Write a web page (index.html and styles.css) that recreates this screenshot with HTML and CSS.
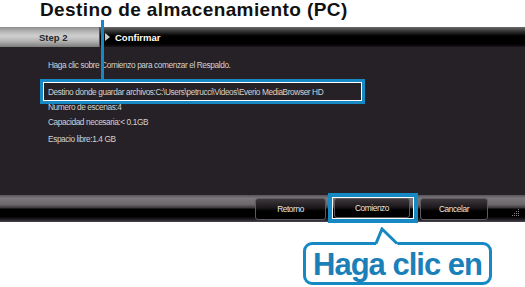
FILE: index.html
```html
<!DOCTYPE html>
<html lang="es">
<head>
<meta charset="utf-8">
<title>Destino de almacenamiento (PC)</title>
<link rel="stylesheet" href="styles.css">
</head>
<body>
<div class="page">
  <h1 class="title">Destino de almacenamiento (PC)</h1>
  <div class="window">
    <div class="header">
      <div class="step">Step 2</div>
      <div class="crumb"><span class="arrow"></span>Confirmar</div>
    </div>
    <div class="content">
      <p class="line l1">Haga clic sobre Comienzo para comenzar el Respaldo.</p>
      <p class="line l2">Destino donde guardar archivos:C:\Users\petrucci\Videos\Everio MediaBrowser HD</p>
      <p class="line l3">Numero de escenas:4</p>
      <p class="line l4">Capacidad necesaria:&lt; 0.1GB</p>
      <p class="line l5">Espacio libre:1.4 GB</p>
    </div>
    <div class="footer">
      <button class="btn b-back">Retorno</button>
      <button class="btn b-start">Comienzo</button>
      <button class="btn b-cancel">Cancelar</button>
      <svg class="grip" width="8" height="8" viewBox="0 0 8 8"><g fill="#8a868c"><rect x="6" y="0" width="1" height="1"/><rect x="4" y="2" width="1" height="1"/><rect x="6" y="2" width="1" height="1"/><rect x="2" y="4" width="1" height="1"/><rect x="4" y="4" width="1" height="1"/><rect x="6" y="4" width="1" height="1"/><rect x="0" y="6" width="1" height="1"/><rect x="2" y="6" width="1" height="1"/><rect x="4" y="6" width="1" height="1"/><rect x="6" y="6" width="1" height="1"/></g></svg>
    </div>
  </div>
  <div class="callout-row">
    <div class="callout">
      <svg class="tail" width="30" height="18" viewBox="0 0 30 18"><polygon points="4,18 10,2 26,18" fill="#fff"/><polyline points="4,16.5 10,2 25,16.5" fill="none" stroke="#1689c4" stroke-width="3" stroke-linejoin="miter"/></svg>
      <span class="callout-text">Haga clic en</span>
    </div>
  </div>
  <div class="connector"></div>
  <div class="mark mark-dest"></div>
  <div class="mark mark-btn"></div>
</div>
</body>
</html>
```

FILE: styles.css
```css
* { box-sizing: border-box; }
html, body { margin: 0; padding: 0; background: #fff; }
body { width: 525px; height: 287px; overflow: hidden; font-family: "Liberation Sans", Arial, sans-serif; }

.page { position: relative; width: 525px; height: 287px; }

.title {
  margin: 0;
  height: 27px;
  padding-left: 40px;
  font-size: 19px;
  line-height: 20px;
  font-weight: bold;
  color: #111;
  letter-spacing: 0.4px;
}

.window { display: flex; flex-direction: column; width: 525px; height: 195px; }

.header { display: flex; height: 20px; background: #000; }
.step {
  width: 100px;
  display: flex; align-items: center;
  padding-left: 39px;
  font-size: 9.5px; font-weight: bold; color: #262626;
  background: linear-gradient(#8e8e8e 0%, #b9b9b9 25%, #cfcfcf 45%, #b4b4b4 70%, #7c7c7c 100%);
  border-right: 1px solid #555;
}
.crumb {
  flex: 1;
  display: flex; align-items: center;
  padding-left: 5px;
  font-size: 9.5px; font-weight: bold; color: #fff;
  background: linear-gradient(#6a6a6a 0%, #2a2a2a 25%, #000 45%, #000 85%, #1a1519 100%);
}
.arrow {
  width: 0; height: 0;
  border-top: 4px solid transparent;
  border-bottom: 4px solid transparent;
  border-left: 5px solid #c8c8c8;
  margin-right: 5px;
}

.content {
  flex: 1;
  background: #262126;
  padding-left: 48px;
  padding-top: 13px;
}
.line {
  margin: 0;
  height: 10px;
  font-size: 8.3px;
  line-height: 10px;
  color: #d2d2d2;
  letter-spacing: -0.4px;
  white-space: nowrap;
}
.l2 { margin-top: 17px; }
.l3 { margin-top: 5px; }
.l4 { margin-top: 5px; }
.l5 { margin-top: 7px; }

.footer {
  position: relative;
  height: 27px;
  display: flex;
  justify-content: flex-end;
  align-items: flex-start;
  gap: 8px;
  padding: 3px 37px 0 0;
  background: linear-gradient(#5a5458 0%, #7c777b 12%, #6c676b 35%, #3a3539 48%, #000 52%, #000 80%, #201b20 90%, #4a4650 100%);
}
.btn {
  height: 22px;
  border: 1px solid #5e5a5e;
  border-radius: 3px;
  background: linear-gradient(#3c383c 0%, #1a161a 45%, #000 60%, #000 100%);
  color: #e8e8e8;
  font-family: "Liberation Sans", Arial, sans-serif;
  font-size: 8.3px;
  letter-spacing: -0.4px;
  padding: 0;
}
.b-back { width: 71px; }
.b-start { width: 76px; margin-left: 0; margin-right: 2px; height: 20px; }
.b-cancel { width: 68px; }
.grip { position: absolute; right: 5px; bottom: 5px; }

.callout-row { display: flex; padding: 20px 0 0 303px; }
.callout {
  position: relative;
  width: 189px;
  height: 43px;
  border: 3px solid #1689c4;
  border-radius: 9px;
  background: #fff;
  display: flex; align-items: center; justify-content: center;
}
.tail { position: absolute; left: 66px; top: -18px; }
.callout-text {
  font-size: 31px;
  font-weight: bold;
  color: #1b7fb8;
  letter-spacing: -1px;
  line-height: 34px;
  margin-top: 2px;
}

.connector {
  position: absolute;
  left: 101px; top: 20px;
  width: 3px; height: 60px;
  background: #1689c4;
}
.mark {
  position: absolute;
  border: 3px solid #1689c4;
  box-shadow: inset 0 0 0 1px #fff;
}
.mark-dest { left: 40px; top: 79px; width: 325px; height: 25px; }
.mark-btn { left: 328px; top: 193px; width: 90px; height: 30px; border-width: 4px; }
```
